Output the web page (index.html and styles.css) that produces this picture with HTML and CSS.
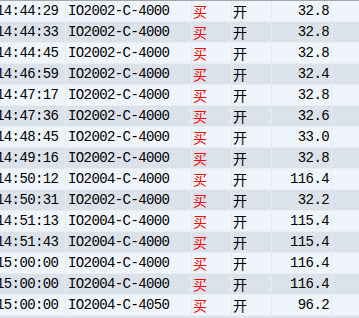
FILE: index.html
```html
<!DOCTYPE html>
<html lang="zh">
<head>
<meta charset="utf-8">
<link rel="stylesheet" href="styles.css">
</head>
<body>
<div class="grid">
  <div class="row"><span class="c t">14:44:29</span><span class="c code">IO2002-C-4000</span><span class="c cn buy">买</span><span class="c cn">开</span><span class="c num">32.8</span><span class="c fill"></span></div>
  <div class="row"><span class="c t">14:44:33</span><span class="c code">IO2002-C-4000</span><span class="c cn buy">买</span><span class="c cn">开</span><span class="c num">32.8</span><span class="c fill"></span></div>
  <div class="row"><span class="c t">14:44:45</span><span class="c code">IO2002-C-4000</span><span class="c cn buy">买</span><span class="c cn">开</span><span class="c num">32.8</span><span class="c fill"></span></div>
  <div class="row"><span class="c t">14:46:59</span><span class="c code">IO2002-C-4000</span><span class="c cn buy">买</span><span class="c cn">开</span><span class="c num">32.4</span><span class="c fill"></span></div>
  <div class="row"><span class="c t">14:47:17</span><span class="c code">IO2002-C-4000</span><span class="c cn buy">买</span><span class="c cn">开</span><span class="c num">32.8</span><span class="c fill"></span></div>
  <div class="row"><span class="c t">14:47:36</span><span class="c code">IO2002-C-4000</span><span class="c cn buy">买</span><span class="c cn">开</span><span class="c num">32.6</span><span class="c fill"></span></div>
  <div class="row"><span class="c t">14:48:45</span><span class="c code">IO2002-C-4000</span><span class="c cn buy">买</span><span class="c cn">开</span><span class="c num">33.0</span><span class="c fill"></span></div>
  <div class="row"><span class="c t">14:49:16</span><span class="c code">IO2002-C-4000</span><span class="c cn buy">买</span><span class="c cn">开</span><span class="c num">32.8</span><span class="c fill"></span></div>
  <div class="row"><span class="c t">14:50:12</span><span class="c code">IO2004-C-4000</span><span class="c cn buy">买</span><span class="c cn">开</span><span class="c num">116.4</span><span class="c fill"></span></div>
  <div class="row"><span class="c t">14:50:31</span><span class="c code">IO2002-C-4000</span><span class="c cn buy">买</span><span class="c cn">开</span><span class="c num">32.2</span><span class="c fill"></span></div>
  <div class="row"><span class="c t">14:51:13</span><span class="c code">IO2004-C-4000</span><span class="c cn buy">买</span><span class="c cn">开</span><span class="c num">115.4</span><span class="c fill"></span></div>
  <div class="row"><span class="c t">14:51:43</span><span class="c code">IO2004-C-4000</span><span class="c cn buy">买</span><span class="c cn">开</span><span class="c num">115.4</span><span class="c fill"></span></div>
  <div class="row"><span class="c t">15:00:00</span><span class="c code">IO2004-C-4000</span><span class="c cn buy">买</span><span class="c cn">开</span><span class="c num">116.4</span><span class="c fill"></span></div>
  <div class="row"><span class="c t">15:00:00</span><span class="c code">IO2004-C-4000</span><span class="c cn buy">买</span><span class="c cn">开</span><span class="c num">116.4</span><span class="c fill"></span></div>
  <div class="row"><span class="c t">15:00:00</span><span class="c code">IO2004-C-4050</span><span class="c cn buy">买</span><span class="c cn">开</span><span class="c num">96.2</span><span class="c fill"></span></div>
  <div class="row"><span class="c t"></span><span class="c code"></span><span class="c cn"></span><span class="c cn"></span><span class="c num"></span><span class="c fill"></span></div>
</div>
</body>
</html>
```
FILE: styles.css
```css
html, body {
  margin: 0;
  padding: 0;
  overflow: hidden;
  background: #f0f5fb;
}
.grid {
  margin-left: -6px;
  border-top: 1px solid #a3a7ad;
  font-family: "Liberation Mono", monospace;
  font-size: 14px;
  letter-spacing: -0.6px;
  color: #000;
}
.row {
  display: grid;
  grid-template-columns: 72px 126px 40px 40px 60px 1fr;
  height: 21px;
  box-sizing: border-box;
  border-bottom: 1px solid #e8edf2;
  background: #f0f5fb;
}
.row:nth-child(even) {
  background: #dce2ea;
}
.c {
  display: block;
  line-height: 20px;
  height: 20px;
  border-right: 1px solid #e6ebf0;
  white-space: nowrap;
  overflow: hidden;
}
.t {
  padding-left: 2px;
}
.code {
  padding-left: 2px;
}
.cn {
  font-family: "Noto Sans CJK SC", sans-serif;
  font-size: 14px;
  letter-spacing: 0;
  padding-left: 1px;
}
.buy {
  color: #ff0000;
}
.num {
  text-align: right;
  padding-right: 2px;
}
.fill {
  border-right: none;
}
```
